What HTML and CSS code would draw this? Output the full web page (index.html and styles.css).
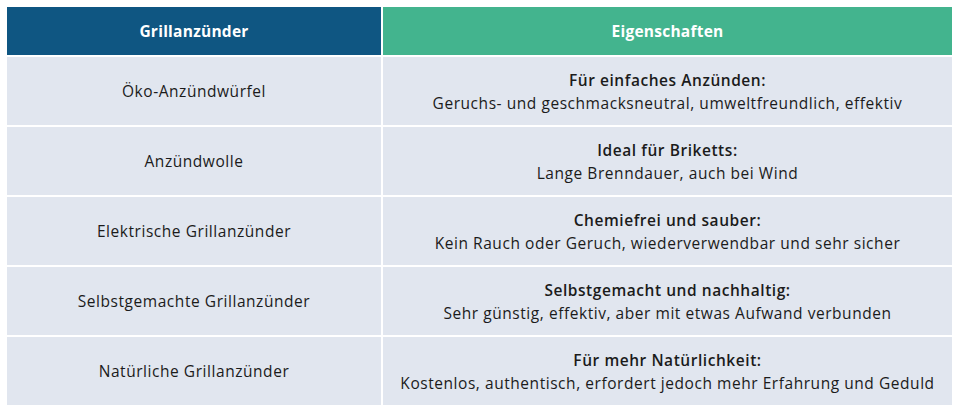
FILE: index.html
```html
<!DOCTYPE html>
<html lang="de">
<head>
<meta charset="utf-8">
<link rel="stylesheet" href="styles.css">
</head>
<body>
<div class="table">
  <div class="th th-left">Grillanzünder</div>
  <div class="th th-right">Eigenschaften</div>

  <div class="td">Öko-Anzündwürfel</div>
  <div class="td"><div><b>Für einfaches Anzünden:</b><br>Geruchs- und geschmacksneutral, umweltfreundlich, effektiv</div></div>

  <div class="td">Anzündwolle</div>
  <div class="td"><div><b>Ideal für Briketts:</b><br>Lange Brenndauer, auch bei Wind</div></div>

  <div class="td">Elektrische Grillanzünder</div>
  <div class="td"><div><b>Chemiefrei und sauber:</b><br>Kein Rauch oder Geruch, wiederverwendbar und sehr sicher</div></div>

  <div class="td">Selbstgemachte Grillanzünder</div>
  <div class="td"><div><b>Selbstgemacht und nachhaltig:</b><br>Sehr günstig, effektiv, aber mit etwas Aufwand verbunden</div></div>

  <div class="td">Natürliche Grillanzünder</div>
  <div class="td"><div><b>Für mehr Natürlichkeit:</b><br>Kostenlos, authentisch, erfordert jedoch mehr Erfahrung und Geduld</div></div>
</div>
</body>
</html>
```

FILE: styles.css
```css
html, body {
  margin: 0;
  padding: 0;
  background: #ffffff;
}
body {
  padding: 7px 0 0 7px;
  font-family: "Open Sans", Roboto, "Liberation Sans", sans-serif;
  font-size: 15.5px;
  color: #1b1b1b;
}
.table {
  display: grid;
  grid-template-columns: 374px 569px;
  grid-template-rows: 48px repeat(5, 68px);
  gap: 2px;
  width: 945px;
}
.th {
  display: flex;
  align-items: center;
  justify-content: center;
  color: #ffffff;
  font-weight: 700;
  letter-spacing: 0.25px;
}
.th-left { background: #0f5682; }
.th-right { background: #43b48e; }
.td {
  display: flex;
  align-items: center;
  justify-content: center;
  text-align: center;
  background: #e1e6ef;
  line-height: 23px;
  letter-spacing: 0.55px;
  padding-top: 1px;
}
.td b { font-weight: 600; }
```
